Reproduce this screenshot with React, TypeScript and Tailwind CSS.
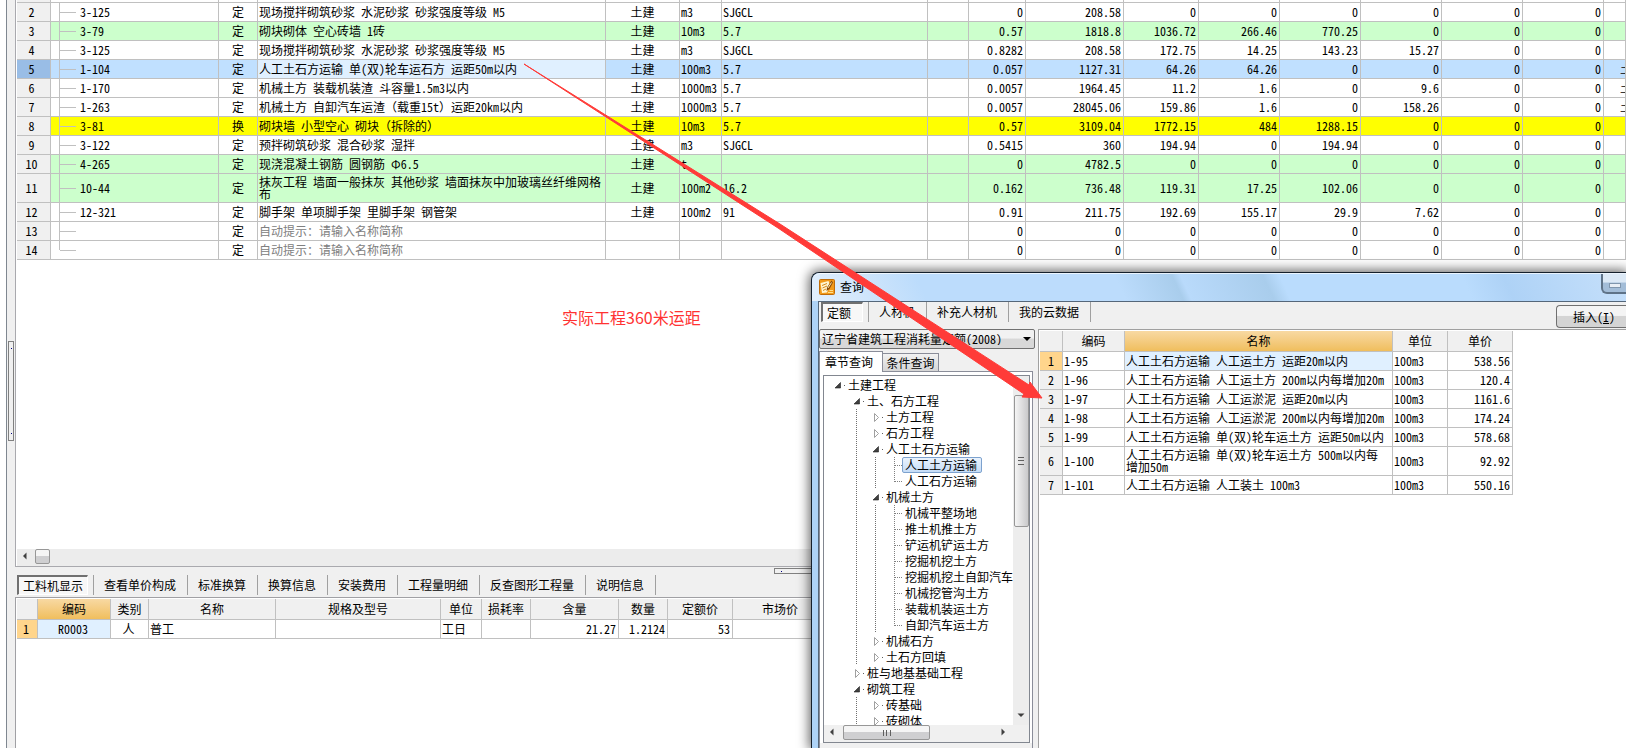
import type { ReactNode } from "react";
import clsx from "clsx";

type Tone = "plain" | "green" | "blue" | "yellow";

interface QuotaRow {
  no: number;
  code: string;
  kind: string;
  name: string;
  major: string;
  unit: string;
  expr: string;
  nums: string[];
  tone?: Tone;
  tall?: boolean;
  hint?: boolean;
  extra?: string;
}

const quotaRows: QuotaRow[] = [
  { no: 2, code: "3-125", kind: "定", name: "现场搅拌砌筑砂浆 水泥砂浆 砂浆强度等级 M5", major: "土建", unit: "m3", expr: "SJGCL", nums: ["0", "208.58", "0", "0", "0", "0", "0", "0"] },
  { no: 3, code: "3-79", kind: "定", name: "砌块砌体 空心砖墙 1砖", major: "土建", unit: "10m3", expr: "5.7", nums: ["0.57", "1818.8", "1036.72", "266.46", "770.25", "0", "0", "0"], tone: "green" },
  { no: 4, code: "3-125", kind: "定", name: "现场搅拌砌筑砂浆 水泥砂浆 砂浆强度等级 M5", major: "土建", unit: "m3", expr: "SJGCL", nums: ["0.8282", "208.58", "172.75", "14.25", "143.23", "15.27", "0", "0"] },
  { no: 5, code: "1-104", kind: "定", name: "人工土石方运输 单(双)轮车运石方 运距50m以内", major: "土建", unit: "100m3", expr: "5.7", nums: ["0.057", "1127.31", "64.26", "64.26", "0", "0", "0", "0"], tone: "blue", extra: "土石方" },
  { no: 6, code: "1-170", kind: "定", name: "机械土方 装载机装渣 斗容量1.5m3以内", major: "土建", unit: "1000m3", expr: "5.7", nums: ["0.0057", "1964.45", "11.2", "1.6", "0", "9.6", "0", "0"], extra: "土石方" },
  { no: 7, code: "1-263", kind: "定", name: "机械土方 自卸汽车运渣（载重15t）运距20㎞以内", major: "土建", unit: "1000m3", expr: "5.7", nums: ["0.0057", "28045.06", "159.86", "1.6", "0", "158.26", "0", "0"], extra: "土石方" },
  { no: 8, code: "3-81", kind: "换", name: "砌块墙 小型空心 砌块（拆除的）", major: "土建", unit: "10m3", expr: "5.7", nums: ["0.57", "3109.04", "1772.15", "484", "1288.15", "0", "0", "0"], tone: "yellow" },
  { no: 9, code: "3-122", kind: "定", name: "预拌砌筑砂浆 混合砂浆 湿拌", major: "土建", unit: "m3", expr: "SJGCL", nums: ["0.5415", "360", "194.94", "0", "194.94", "0", "0", "0"] },
  { no: 10, code: "4-265", kind: "定", name: "现浇混凝土钢筋 圆钢筋 Φ6.5", major: "土建", unit: "t", expr: "", nums: ["0", "4782.5", "0", "0", "0", "0", "0", "0"], tone: "green" },
  { no: 11, code: "10-44", kind: "定", name: "抹灰工程 墙面一般抹灰 其他砂浆 墙面抹灰中加玻璃丝纤维网格布", major: "土建", unit: "100m2", expr: "16.2", nums: ["0.162", "736.48", "119.31", "17.25", "102.06", "0", "0", "0"], tone: "green", tall: true },
  { no: 12, code: "12-321", kind: "定", name: "脚手架 单项脚手架 里脚手架 钢管架", major: "土建", unit: "100m2", expr: "91", nums: ["0.91", "211.75", "192.69", "155.17", "29.9", "7.62", "0", "0"] },
  { no: 13, code: "", kind: "定", name: "自动提示：请输入名称简称", major: "", unit: "", expr: "", nums: ["0", "0", "0", "0", "0", "0", "0", "0"], hint: true },
  { no: 14, code: "", kind: "定", name: "自动提示：请输入名称简称", major: "", unit: "", expr: "", nums: ["0", "0", "0", "0", "0", "0", "0", "0"], hint: true },
];

const toneClass: Record<Tone, string> = {
  plain: "bg-white",
  green: "bg-[#ccffcc]",
  blue: "bg-[#c0e0ff]",
  yellow: "bg-[#ffff00]",
};

const cell = "border-r border-b border-[#c0c0c0] p-0 overflow-hidden whitespace-nowrap";
const headCell = "border-r border-b border-[#c0c0c0] p-0 font-normal bg-[#f0f0f0]";
const headActive = "border-r border-b border-[#c0c0c0] p-0 font-normal bg-linear-to-b from-[#f8d9a2] to-[#f0be5c]";

const Cols = ({ widths }: { widths: (number | null)[] }) => (
  <colgroup>
    {widths.map((w, i) => (
      <col key={i} style={w ? { width: w } : undefined} />
    ))}
  </colgroup>
);

const QuotaTable = () => {
  const widths = [34, 168, 39, 348, 74, 42, 206, 41, 57, 98, 75, 81, 81, 81, 81, 81, null];
  return (
    <table className="w-full table-fixed border-separate border-spacing-0">
      <Cols widths={widths} />
      <tbody>
        <tr className="h-[3px]">
          {widths.map((_, i) => (
            <td key={i} className={clsx(cell, i === 0 && "bg-[#f0f0f0]")} />
          ))}
        </tr>
        {quotaRows.map((r) => (
          <tr key={r.no} className={clsx(toneClass[r.tone ?? "plain"], r.tall ? "h-[29px]" : "h-[19px]")}>
            <td className={clsx(cell, "pr-1 text-center", r.tone === "blue" ? "bg-[#99bde6]" : "bg-[#f0f0f0]")}>{r.no}</td>
            <td className={cell}>
              <div className={clsx("ml-2 flex items-center", r.tall ? "h-7" : "h-[18px]")}>
                <span className={clsx("w-px self-start bg-[#c0c0c0]", r.no === 14 ? "h-[9px]" : "h-full")} />
                <span className="h-px w-4 bg-[#c0c0c0]" />
                <span className="ml-1">{r.code}</span>
              </div>
            </td>
            <td className={clsx(cell, "text-center")}>{r.kind}</td>
            <td
              className={clsx(
                "overflow-hidden border-r border-b border-[#c0c0c0] py-0 pr-0 pl-px",
                r.tall ? "whitespace-normal break-all" : "whitespace-nowrap",
                r.tone === "blue" && "bg-[#e0f0ff]",
                r.hint && "text-[#808080]"
              )}
            >
              {r.name}
            </td>
            <td className={clsx(cell, "text-center")}>{r.major}</td>
            <td className={clsx(cell, "pl-px")}>{r.unit}</td>
            <td className={clsx(cell, "pl-px")}>{r.expr}</td>
            <td className={cell} />
            {r.nums.map((n, i) => (
              <td key={i} className={clsx(cell, "pr-0.5 text-right")}>{n}</td>
            ))}
            <td className={clsx(cell, "pl-4")}>{r.extra}</td>
          </tr>
        ))}
      </tbody>
    </table>
  );
};

const Tabs = ({ items }: { items: string[] }) => (
  <div className="flex h-5" role="tablist">
    {items.map((label, i) => (
      <div key={label} className="flex h-5 border-r border-[#a0a0a0]">
        {i === 0 ? (
          <button
            role="tab"
            aria-selected
            className="mr-[5px] h-5 min-w-[42px] border-t-2 border-l-2 border-r border-b border-t-[#707070] border-l-[#707070] border-r-white border-b-white bg-[#f7f7f7] pr-1 pl-1 text-left"
          >
            {label}
          </button>
        ) : (
          <button role="tab" className="pr-[11px] pl-2.5">{label}</button>
        )}
      </div>
    ))}
  </div>
);

const Arrow = ({ dir }: { dir: "left" | "right" | "down" }) => (
  <svg width="8" height="8" viewBox="0 0 8 8" className="fill-[#404040]">
    {dir === "left" && <path d="M5.500 0.500v7L2 4z" />}
    {dir === "right" && <path d="M2.500 0.500v7L6 4z" />}
    {dir === "down" && <path d="M0.500 2.500h7L4 6z" />}
  </svg>
);

const DetailTable = () => {
  const heads = ["", "编码", "类别", "名称", "规格及型号", "单位", "损耗率", "含量", "数量", "定额价", "市场价"];
  return (
    <table className="w-[811px] table-fixed border-separate border-spacing-0">
      <Cols widths={[21, 73, 38, 127, 165, 41, 49, 88, 49, 65, null]} />
      <thead>
        <tr className="h-[21px]">
          {heads.map((h, i) => (
            <th key={i} className={i === 1 ? headActive : headCell}>{h}</th>
          ))}
        </tr>
      </thead>
      <tbody>
        <tr className="h-[19px]">
          <td className={clsx(cell, "bg-[#ffd58c] pr-0.5 text-center")}>1</td>
          <td className={clsx(cell, "bg-[#e0f0ff] pr-0.5 text-center")}>R0003</td>
          <td className={clsx(cell, "pr-0.5 text-center")}>人</td>
          <td className={clsx(cell, "pl-px")}>普工</td>
          <td className={cell} />
          <td className={clsx(cell, "pl-px")}>工日</td>
          <td className={cell} />
          <td className={clsx(cell, "pr-0.5 text-right")}>21.27</td>
          <td className={clsx(cell, "pr-0.5 text-right")}>1.2124</td>
          <td className={clsx(cell, "pr-0.5 text-right")}>53</td>
          <td className={cell} />
        </tr>
      </tbody>
    </table>
  );
};

type NodeKind = "open" | "closed" | "leaf" | "last";

const treeNodes: { level: number; kind: NodeKind; label: string; selected?: boolean }[] = [
  { level: 1, kind: "open", label: "土建工程" },
  { level: 2, kind: "open", label: "土、石方工程" },
  { level: 3, kind: "closed", label: "土方工程" },
  { level: 3, kind: "closed", label: "石方工程" },
  { level: 3, kind: "open", label: "人工土石方运输" },
  { level: 4, kind: "leaf", label: "人工土方运输", selected: true },
  { level: 4, kind: "last", label: "人工石方运输" },
  { level: 3, kind: "open", label: "机械土方" },
  { level: 4, kind: "leaf", label: "机械平整场地" },
  { level: 4, kind: "leaf", label: "推土机推土方" },
  { level: 4, kind: "leaf", label: "铲运机铲运土方" },
  { level: 4, kind: "leaf", label: "挖掘机挖土方" },
  { level: 4, kind: "leaf", label: "挖掘机挖土自卸汽车运土" },
  { level: 4, kind: "leaf", label: "机械挖管沟土方" },
  { level: 4, kind: "leaf", label: "装载机装运土方" },
  { level: 4, kind: "last", label: "自卸汽车运土方" },
  { level: 3, kind: "closed", label: "机械石方" },
  { level: 3, kind: "closed", label: "土石方回填" },
  { level: 2, kind: "closed", label: "桩与地基基础工程" },
  { level: 2, kind: "open", label: "砌筑工程" },
  { level: 3, kind: "closed", label: "砖基础" },
  { level: 3, kind: "closed", label: "砖砌体" },
];

const TreeMark = ({ kind }: { kind: NodeKind }) => (
  <svg width="11" height="16" viewBox="0 0 11 16" className="shrink-0 overflow-visible">
    {kind === "open" && <path d="M6.500 5.500v5.500H1z" fill="#404040" stroke="#202020" strokeWidth=".6" />}
    {kind === "closed" && <path d="M2.500 4.500v8l4-4z" fill="#fff" stroke="#a0a0a0" />}
    {(kind === "open" || kind === "closed") && <path d="M10 8h1v1h-1z" fill="#606060" />}
    {kind === "leaf" && <path d="M3.500 0v16" stroke="#808080" strokeDasharray="1 1" />}
    {kind === "last" && <path d="M3.500 0v9" stroke="#808080" strokeDasharray="1 1" />}
    {(kind === "leaf" || kind === "last") && <path d="M4 8.500h8" stroke="#808080" strokeDasharray="1 1" />}
  </svg>
);

const Guide = ({ line }: { line: boolean }) => (
  <svg width="19" height="16" viewBox="0 0 19 16" className="shrink-0">
    {line && <path d="M3.500 0v16" stroke="#707070" strokeDasharray="1 1" />}
  </svg>
);

const ChapterTree = () => (
  <ul className="min-h-0 min-w-0 flex-1 overflow-hidden pt-px pl-2.5">
    {treeNodes.map((n) => (
      <li key={n.label} className="flex h-4">
        {Array.from({ length: n.level - 1 }, (_, i) => (
          <Guide key={i} line={i > 0} />
        ))}
        <TreeMark kind={n.kind} />
        <span
          className={clsx(
            "h-4 rounded-xs border pr-1 pl-0.5 leading-[14px] whitespace-nowrap",
            n.selected ? "border-[#7da2ce] bg-linear-to-b from-[#eaf3fe] to-[#c5dcf7]" : "border-transparent"
          )}
        >
          {n.label}
        </span>
      </li>
    ))}
  </ul>
);

const queryRows = [
  ["1-95", "人工土石方运输 人工运土方 运距20m以内", "538.56"],
  ["1-96", "人工土石方运输 人工运土方 200m以内每增加20m", "120.4"],
  ["1-97", "人工土石方运输 人工运淤泥 运距20m以内", "1161.6"],
  ["1-98", "人工土石方运输 人工运淤泥 200m以内每增加20m", "174.24"],
  ["1-99", "人工土石方运输 单(双)轮车运土方 运距50m以内", "578.68"],
  ["1-100", "人工土石方运输 单(双)轮车运土方 500m以内每增加50m", "92.92"],
  ["1-101", "人工土石方运输 人工装土 100m3", "550.16"],
];

const QueryTable = () => (
  <table className="w-[473px] table-fixed border-separate border-spacing-0">
    <Cols widths={[23, 62, 268, 55, 65]} />
    <thead>
      <tr className="h-[21px]">
        {["", "编码", "名称", "单位", "单价"].map((h, i) => (
          <th key={i} className={i === 2 ? headActive : headCell}>{h}</th>
        ))}
      </tr>
    </thead>
    <tbody>
      {queryRows.map(([code, name, price], i) => (
        <tr key={code} className={i === 5 ? "h-[29px]" : "h-[19px]"}>
          <td className={clsx(cell, "text-center", i === 0 ? "bg-[#ffd58c]" : "bg-[#f0f0f0]")}>{i + 1}</td>
          <td className={clsx(cell, "pl-px")}>{code}</td>
          <td
            className={clsx(
              "overflow-hidden border-r border-b border-[#c0c0c0] py-0 pl-px",
              i === 5 ? "pr-3 break-all" : "pr-0 whitespace-nowrap",
              i === 0 && "bg-[#e0f0ff]"
            )}
          >
            {name}
          </td>
          <td className={clsx(cell, "pl-px")}>100m3</td>
          <td className={clsx(cell, "pr-0.5 text-right")}>{price}</td>
        </tr>
      ))}
    </tbody>
  </table>
);

const AppIcon = () => (
  <svg width="16" height="16" viewBox="0 0 16 16">
    <rect x=".5" y=".5" width="15" height="15" rx="1" fill="#f29a1a" stroke="#c06c08" />
    <path d="M1.500 4 9.500 2l1.500 4-3 7.500-5 .5z" fill="#fff6d2" />
    <path d="M3 6.500 8 4.500M3.500 9l4.500-2M4 11.500l3-1.500" stroke="#d88a1c" />
    <path d="M12.500 1.500 8 8.500 7.500 12l3-2L14 3.500z" fill="#8a4a08" />
    <path d="M12.500 3.500 9 9" stroke="#ffe9a8" />
    <path d="M10.500 11.500H14M9 13.500h5" stroke="#ffe08a" />
  </svg>
);

const Thumb = ({ className, children }: { className: string; children?: ReactNode }) => (
  <div className={clsx("flex items-center justify-center rounded-xs border border-[#979797]", className)}>{children}</div>
);

const QueryDialog = () => (
  <section
    aria-label="查询"
    className="absolute top-[272px] right-0 bottom-0 left-[811px] flex flex-col rounded-tl-lg border-t border-l border-[#15202c] bg-[#aed3f7] pl-1.5 shadow-[0_0_12px_2px_rgba(0,0,0,0.6)]"
  >
    <header className="-ml-1.5 flex h-7 shrink-0 items-start justify-between rounded-tl-lg border-t border-white/70 bg-[linear-gradient(65deg,#e3f0fd_0%,#cfe5fb_7%,#bcdcfc_14%,#bcdcfc_38%,#a9cdec_45%,#b9dafb_46%,#a9cdec_56%,#badcfd_58%,#badcfd_80%,#aed2f6_85%,#c6e0fb_100%)] pl-[7px]">
      <div className="flex items-center gap-[5px] pt-[5px]">
        <AppIcon />
        <h1 className="text-xs leading-4">查询</h1>
      </div>
      <button
        aria-label="最小化"
        className="flex h-5 w-[25px] items-center justify-center rounded-bl-md border-b-2 border-l-2 border-[#5f7388] bg-linear-to-b from-[#dce9f6] from-45% to-[#a3bdd8] to-50%"
      >
        <span className="mt-1 h-[5px] w-3 border border-[#8096ad] bg-[#e8eef5]" />
      </button>
    </header>
    <div className="flex min-h-0 flex-1 flex-col border-t border-l border-[#55677a] bg-[#f0f0f0]">
      <div className="flex h-[27px] shrink-0 justify-between">
        <div className="pl-0.5">
          <Tabs items={["定额", "人材机", "补充人材机", "我的云数据"]} />
        </div>
        <button className="mt-[3px] h-[23px] w-[70px] rounded-l-sm border border-r-0 border-[#707070] bg-linear-to-b from-[#f4f4f4] from-45% to-[#d4d4d4] to-50% pl-4 text-left">
          插入(<u>I</u>)
        </button>
      </div>
      <div className="flex min-h-0 flex-1">
        <div className="mr-[3px] flex w-[216px] shrink-0 flex-col">
          <div className="relative mb-0.5 shrink-0">
            <select
              aria-label="定额库"
              className="block h-5 w-full appearance-none rounded-xs border border-[#707070] bg-linear-to-b from-[#f2f2f2] from-45% to-[#d8d8d8] to-50% pl-0.5"
            >
              <option>辽宁省建筑工程消耗量定额(2008)</option>
            </select>
            <svg width="8" height="4" viewBox="0 0 8 4" className="pointer-events-none absolute top-2 right-1">
              <path d="M0 0h8L4 4z" />
            </svg>
          </div>
          <div className="flex shrink-0 items-end" role="tablist">
            <button role="tab" aria-selected className="relative z-10 -mb-px h-[21px] w-16 border border-b-0 border-[#8a8d99] bg-white pr-1">
              章节查询
            </button>
            <button role="tab" className="h-[18px] w-14 border border-b-0 border-l-0 border-[#8a8d99] bg-linear-to-b from-[#f2f2f2] to-[#d5d5d5]">
              条件查询
            </button>
          </div>
          <div className="mr-0.5 flex min-h-0 flex-1 flex-col border-t border-r border-l border-[#8a8d99] bg-white pt-[3px] pr-0.5 pl-[3px]">
            <div className="flex min-h-0 flex-1 flex-col border border-[#828790]">
              <div className="flex min-h-0 flex-1">
                <ChapterTree />
                <div className="flex w-4 flex-col items-center bg-[#ededed] pt-[19px] pb-1.5">
                  <Thumb className="h-[132px] w-[15px] bg-linear-to-r from-[#f5f5f5] to-[#c9c9cb]">
                    <span className="h-2 w-1.5 border-y border-[#606060] bg-[linear-gradient(#0000_2px,#606060_2px,#606060_3px,#0000_3px)]" />
                  </Thumb>
                  <span className="flex-1" />
                  <Arrow dir="down" />
                </div>
              </div>
              <div className="flex h-[17px] shrink-0 items-start bg-[#f0f0f0] pl-1">
                <span className="pt-[3px]">
                  <Arrow dir="left" />
                </span>
                <Thumb className="ml-[7px] h-[15px] w-[87px] bg-linear-to-b from-[#f5f5f5] from-45% to-[#cfcfd1] to-50%">
                  <span className="h-1.5 w-2 border-x border-[#606060] bg-[linear-gradient(90deg,#0000_2px,#606060_2px,#606060_3px,#0000_3px)]" />
                </Thumb>
                <span className="flex-1" />
                <span className="pt-[3px] pr-[22px]">
                  <Arrow dir="right" />
                </span>
              </div>
            </div>
            <div className="-mr-0.5 -ml-[3px] h-[5px] shrink-0 bg-[#f0f0f0]" />
          </div>
        </div>
        <div className="min-w-0 flex-1 border-t border-l border-[#a0a0a0] bg-white pt-px pl-px">
          <QueryTable />
        </div>
      </div>
    </div>
  </section>
);

export default function App() {
  return (
    <main className="relative flex h-screen overflow-hidden bg-white font-['Noto_Sans_Mono_CJK_SC','Noto_Sans_CJK_SC',monospace] text-xs leading-3 text-black">
      <div className="ml-1.5 w-[9px] shrink-0 border-l border-[#7f8790] bg-[#f0f0f0] pt-[341px] pl-px">
        <div className="flex h-[100px] w-1.5 flex-col items-center justify-between border border-[#808080] py-1.5">
          <span className="size-px bg-[#000080]" />
          <span className="size-px bg-[#000080]" />
        </div>
      </div>
      <div className="flex min-w-0 flex-1 flex-col">
        <div className="flex min-h-0 flex-1 flex-col border-b border-l border-[#a9a9ae] pl-px">
          <div className="min-h-0 flex-1 overflow-hidden">
            <QuotaTable />
          </div>
          <div className="flex h-[17px] shrink-0 items-start bg-[#ececec] pl-1">
            <span className="pt-[3px]">
              <Arrow dir="left" />
            </span>
            <Thumb className="ml-1.5 size-[15px] bg-linear-to-b from-[#f5f5f5] from-45% to-[#cfcfd1] to-50%" />
          </div>
        </div>
        <div className="h-[30px] shrink-0 bg-[#f0f0f0] pt-px">
          <div className="mx-auto h-1.5 w-[94px] border border-[#808080] px-1.5 pt-0.5">
            <span className="block size-px bg-[#000080]" />
          </div>
          <div className="pt-px pl-0.5">
            <Tabs items={["工料机显示", "查看单价构成", "标准换算", "换算信息", "安装费用", "工程量明细", "反查图形工程量", "说明信息"]} />
          </div>
        </div>
        <div className="h-[151px] shrink-0 border-t border-l border-[#a0a0a4] pt-px pl-px">
          <DetailTable />
        </div>
      </div>

      <QueryDialog />

      <p className="absolute top-[309px] left-[562px] font-['Noto_Sans_CJK_SC',sans-serif] text-base leading-4 text-[#ff3232]">
        实际工程360米运距
      </p>
      <svg className="pointer-events-none absolute inset-0 size-full" aria-hidden="true">
        <path d="M524 64 780 224 1029 385l1-3 12 16-20-1 2-3L778 228z" fill="#ff3b38" stroke="#ff3b38" strokeWidth="1" strokeLinejoin="round" />
      </svg>
    </main>
  );
}
